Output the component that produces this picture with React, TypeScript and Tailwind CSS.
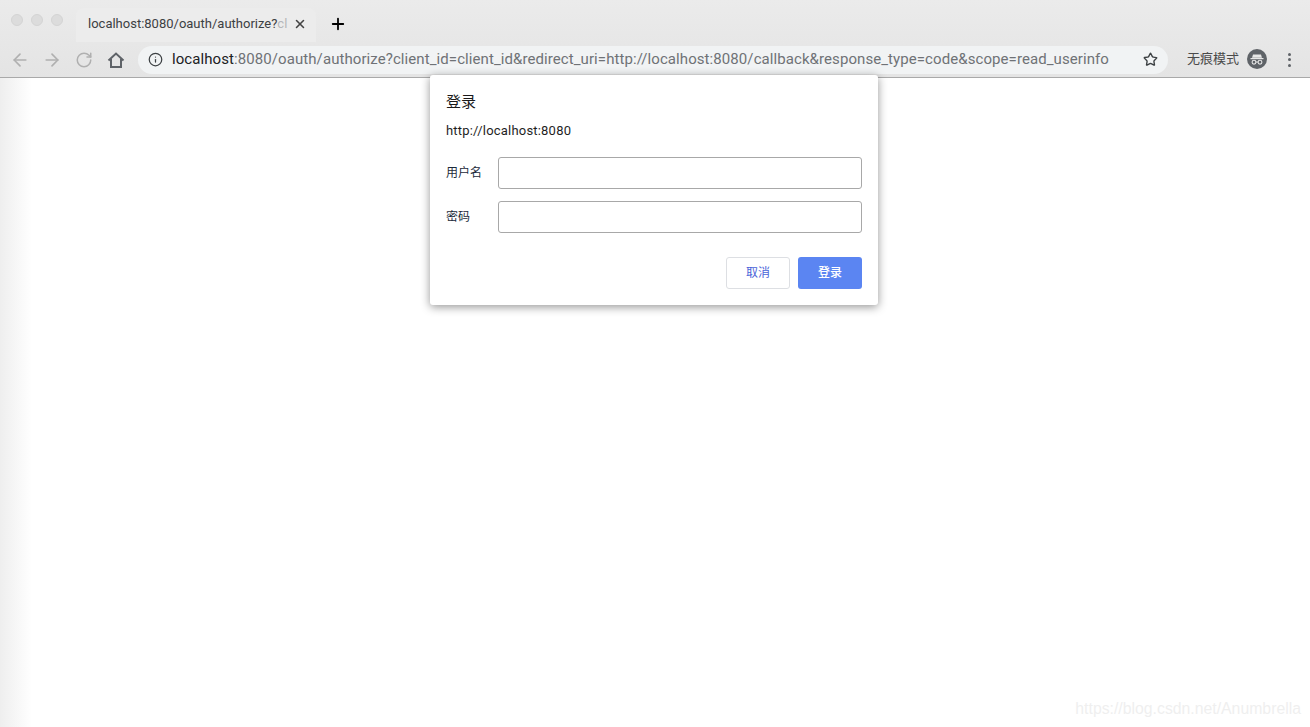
import React from 'react';
import { ArrowLeft, ArrowRight, RotateCw, Star, Info, X, Plus } from 'lucide-react';

const cjk = "font-['Roboto','Noto_Sans_CJK_SC',sans-serif]";

function TrafficLights() {
	return (
		<div className="flex gap-2 pl-[11px] pr-[13px] pt-[14px]">
			<span className="h-3 w-3 rounded-full border border-[#d4d4d4] bg-[#dcdcdc]" />
			<span className="h-3 w-3 rounded-full border border-[#d4d4d4] bg-[#dcdcdc]" />
			<span className="h-3 w-3 rounded-full border border-[#d4d4d4] bg-[#dcdcdc]" />
		</div>
	);
}

function Tab() {
	return (
		<div className="mt-[8px] flex h-[34px] w-[240px] items-center rounded-t-lg bg-[#ececec] pb-[2px] pl-[12px]">
			<span className="w-[202px] whitespace-nowrap text-[13px] text-[#3c4043]">
				localhost:8080/oauth/authorize?<span className="text-[#b5b7b9]">cl</span>
			</span>
			<X className="ml-[3px] h-[14px] w-[14px] text-[#444]" strokeWidth={2.6} />
		</div>
	);
}

function HomeIcon() {
	return (
		<svg width="18" height="18" viewBox="0 0 18 18" fill="none" stroke="#5f6368" strokeWidth="2">
			<path d="M1.5 9.5 9 2.5l7.5 7" />
			<path d="M4 8v8h10V8" />
		</svg>
	);
}

function IncognitoIcon() {
	return (
		<svg width="20" height="20" viewBox="0 0 20 20" className="shrink-0">
			<circle cx="10" cy="10" r="10" fill="#5f6368" />
			<path d="M6 5.5h8l1 3.2H5z" fill="#e6e6e6" />
			<rect x="3.5" y="9" width="13" height="1.2" fill="#e6e6e6" />
			<circle cx="7" cy="13.2" r="1.9" fill="none" stroke="#e6e6e6" strokeWidth="1.1" />
			<circle cx="13" cy="13.2" r="1.9" fill="none" stroke="#e6e6e6" strokeWidth="1.1" />
			<path d="M8.9 13h2.2" stroke="#e6e6e6" strokeWidth="1" />
		</svg>
	);
}

function AddressBar() {
	return (
		<div className="flex h-[28px] w-[1030px] items-center rounded-full bg-[#f1f3f4] pl-[10px] pr-[10px]">
			<Info className="h-[15px] w-[15px] shrink-0 text-[#3c4043]" strokeWidth={2} />
			<div className="ml-[9px] w-[938px] shrink-0 whitespace-nowrap text-[15px] tracking-[0.08px] text-[#6f7276]">
				<span className="text-[#202124]">localhost</span>
				:8080/oauth/authorize?client_id=client_id&amp;redirect_uri=http://localhost:8080/callback&amp;response_type=code&amp;scope=read_userinfo
			</div>
			<Star className="ml-auto h-[15px] w-[15px] shrink-0 text-[#3c4043]" strokeWidth={2.2} />
		</div>
	);
}

function BrowserChrome() {
	return (
		<header className={`h-[78px] shrink-0 border-b border-[#a9a9a9] bg-gradient-to-b from-[#ebebeb] to-[#e4e4e4] ${cjk}`}>
			<div className="flex h-[42px] items-start">
				<TrafficLights />
				<Tab />
				<Plus className="ml-[13px] mt-[15px] h-[18px] w-[18px] text-black" strokeWidth={2.4} />
			</div>
			<div className="flex h-[35px] items-center">
				<ArrowLeft className="ml-[10px] h-[20px] w-[20px] text-[#b0b0b0]" strokeWidth={2} />
				<ArrowRight className="ml-[12px] h-[20px] w-[20px] text-[#b0b0b0]" strokeWidth={2} />
				<RotateCw className="ml-[13px] h-[18px] w-[18px] text-[#b0b0b0]" strokeWidth={2} />
				<div className="ml-[14px] flex h-[18px] w-[18px] items-center">
					<HomeIcon />
				</div>
				<div className="ml-[13px]">
					<AddressBar />
				</div>
				<span className="mb-[2px] ml-[19px] whitespace-nowrap text-[13px] text-[#4a4a4a]">无痕模式</span>
				<div className="mb-[2px] ml-[8px]">
					<IncognitoIcon />
				</div>
				<div className="ml-[21px] flex flex-col gap-[2.5px]">
					<span className="h-[3px] w-[3px] rounded-full bg-[#5f6368]" />
					<span className="h-[3px] w-[3px] rounded-full bg-[#5f6368]" />
					<span className="h-[3px] w-[3px] rounded-full bg-[#5f6368]" />
				</div>
			</div>
		</header>
	);
}

function Field({ label }: { label: string }) {
	return (
		<div className="flex h-[32px] items-center">
			<label className="w-[52px] text-[12px] text-[#1b2a3a]">{label}</label>
			<input className="h-[32px] w-[364px] rounded-[3px] border border-[#a8a8a8] bg-white" />
		</div>
	);
}

function LoginDialog() {
	return (
		<div className={`absolute left-[430px] top-[75px] h-[230px] w-[448px] rounded-[3px] bg-white px-4 pt-[17px] shadow-[0_2px_10px_rgba(0,0,0,0.42)] ${cjk}`}>
			<h2 className="text-[15px] leading-[20px] text-[#1a1a1a]">登录</h2>
			<p className="mt-[10px] text-[13px] leading-[18px] tracking-[0.2px] text-[#1f1f1f]">http://localhost:8080</p>
			<div className="mt-[17px] flex flex-col gap-3">
				<Field label="用户名" />
				<Field label="密码" />
			</div>
			<div className="mt-6 flex justify-end gap-2">
				<button className="h-[32px] w-[64px] rounded-[3px] border border-[#dddfe3] bg-white text-[12px] text-[#4a63d8]">取消</button>
				<button className="h-[32px] w-[64px] rounded-[3px] bg-[#5b85f2] text-[12px] font-medium text-white">登录</button>
			</div>
		</div>
	);
}

export default function App() {
	return (
		<div className="relative flex h-[727px] w-[1310px] flex-col overflow-hidden bg-white">
			<BrowserChrome />
			<main className="relative flex-1">
				<div className="h-full w-[32px] bg-gradient-to-r from-[#eeeeee] to-white" />
				<span className="absolute bottom-[6px] right-[9px] font-['Liberation_Sans',sans-serif] text-[15.8px] text-[#efefef]">
					https://blog.csdn.net/Anumbrella
				</span>
			</main>
			<LoginDialog />
		</div>
	);
}
